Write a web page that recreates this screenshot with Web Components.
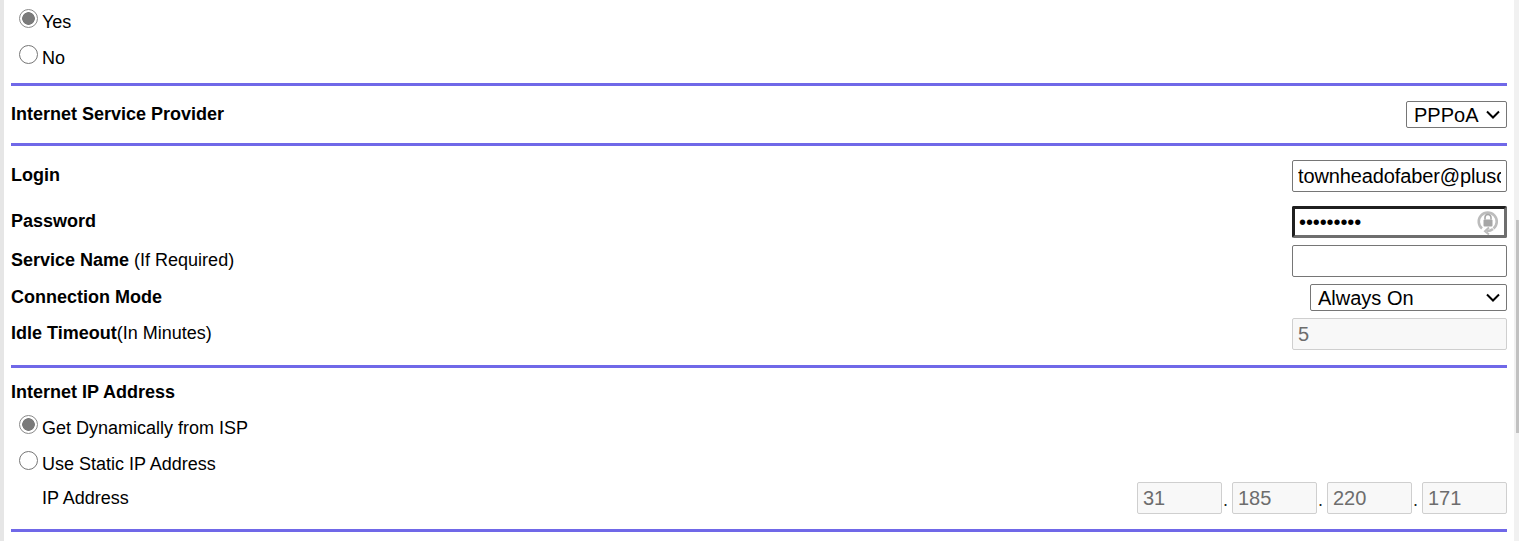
<!DOCTYPE html>
<html lang="en">
<head>
<meta charset="utf-8">
<title>Internet Setup</title>
<style>
	html, body { margin: 0; height: 100%; overflow: hidden; background: #fff; }
</style>
</head>
<body>
<setup-page>
	<form-section pad-top="3" pad-bottom="8">
		<radio-option checked>Yes</radio-option>
		<radio-option>No</radio-option>
	</form-section>
	<form-section pad-top="15" pad-bottom="15">
		<form-row>
			<b slot="label">Internet Service Provider</b>
			<select-field width="101" height="27" options="PPPoA"></select-field>
		</form-row>
	</form-section>
	<form-section pad-top="14" pad-bottom="15">
		<form-row gap="14"><b slot="label">Login</b><text-field value="townheadofaber@pluscom.net"></text-field></form-row>
		<form-row gap="7"><b slot="label">Password</b><text-field type="password" value="townhead1" focused></text-field></form-row>
		<form-row gap="7"><span slot="label"><b>Service Name</b> (If Required)</span><text-field></text-field></form-row>
		<form-row gap="7"><b slot="label">Connection Mode</b><select-field width="197" height="27" options="Always On"></select-field></form-row>
		<form-row><span slot="label"><b>Idle Timeout</b>(In Minutes)</span><text-field value="5" disabled></text-field></form-row>
	</form-section>
	<form-section pad-top="8" pad-bottom="15">
		<form-row height="33"><b slot="label">Internet IP Address</b></form-row>
		<radio-option checked>Get Dynamically from ISP</radio-option>
		<radio-option>Use Static IP Address</radio-option>
		<form-row class="ip" indent="31" height="32" top="1"><span slot="label">IP Address</span><ip-field value="31.185.220.171"></ip-field></form-row>
	</form-section>
	<page-scrollbar></page-scrollbar>
</setup-page>

<script>
const pageTemplate = document.createElement('template')
pageTemplate.innerHTML = `
	<style>
		:host {
			display: block;
			position: relative;
			height: 541px;
			box-sizing: border-box;
			overflow: hidden;
			border-left: 4px solid #e6e6e6;
			padding: 0 12px 0 7px;
			background: #fff;
			color: #000;
			font: 18px "Liberation Sans", Arial, sans-serif;
		}
	</style>
	<slot></slot>
`

class SetupPage extends HTMLElement {
	constructor () {
		super()
		this.attachShadow({ mode: 'open' })
		this.shadowRoot.appendChild(pageTemplate.content.cloneNode(true))
	}
}

const sectionTemplate = document.createElement('template')
sectionTemplate.innerHTML = `
	<style>
		:host {
			display: block;
			border-bottom: 3px solid #7068e8;
		}
		div { display: flex; flex-direction: column; }
	</style>
	<div><slot></slot></div>
`

class FormSection extends HTMLElement {
	constructor () {
		super()
		this.attachShadow({ mode: 'open' })
		this.shadowRoot.appendChild(sectionTemplate.content.cloneNode(true))
	}

	connectedCallback () {
		const box = this.shadowRoot.querySelector('div')
		box.style.paddingTop = (this.getAttribute('pad-top') || 0) + 'px'
		box.style.paddingBottom = (this.getAttribute('pad-bottom') || 0) + 'px'
	}
}

const rowTemplate = document.createElement('template')
rowTemplate.innerHTML = `
	<style>
		:host {
			display: flex;
			align-items: center;
			justify-content: space-between;
		}
		.label { margin-top: -1px; }
		:host(.ip) .label { margin-top: 0; }
	</style>
	<span class="label"><slot name="label"></slot></span>
	<slot></slot>
`

class FormRow extends HTMLElement {
	constructor () {
		super()
		this.attachShadow({ mode: 'open' })
		this.shadowRoot.appendChild(rowTemplate.content.cloneNode(true))
	}

	connectedCallback () {
		if (this.hasAttribute('gap')) this.style.marginBottom = this.getAttribute('gap') + 'px'
		if (this.hasAttribute('top')) this.style.marginTop = this.getAttribute('top') + 'px'
		if (this.hasAttribute('height')) this.style.height = this.getAttribute('height') + 'px'
		if (this.hasAttribute('indent')) this.style.paddingLeft = this.getAttribute('indent') + 'px'
	}
}

const radioTemplate = document.createElement('template')
radioTemplate.innerHTML = `
	<style>
		:host {
			display: flex;
			align-items: center;
			height: 36px;
			padding-left: 8px;
			gap: 4px;
		}
		input {
			appearance: none;
			box-sizing: border-box;
			width: 19px;
			height: 19px;
			margin: -5px 0 0 0;
			border: 1px solid #767676;
			border-radius: 50%;
			background: #fff;
			flex: none;
		}
		input:checked {
			border-color: #8a8a8a;
			background: radial-gradient(circle, #7a7a7a 0 6px, #fff 6.6px);
		}
		label { margin-top: 2px; }
	</style>
	<input type="radio" disabled>
	<label><slot></slot></label>
`

class RadioOption extends HTMLElement {
	constructor () {
		super()
		this.attachShadow({ mode: 'open' })
		this.shadowRoot.appendChild(radioTemplate.content.cloneNode(true))
	}

	connectedCallback () {
		this.shadowRoot.querySelector('input').checked = this.hasAttribute('checked')
	}
}

const textFieldTemplate = document.createElement('template')
textFieldTemplate.innerHTML = `
	<style>
		:host {
			display: block;
			position: relative;
			width: 215px;
			height: 32px;
		}
		input {
			display: block;
			box-sizing: border-box;
			width: 100%;
			height: 100%;
			margin: 0;
			padding: 1px 5px;
			border: 1px solid #767676;
			border-radius: 2px;
			background: #fff;
			color: #000;
			font: 20px "Liberation Sans", Arial, sans-serif;
			letter-spacing: -.12px;
			outline: none;
		}
		input:disabled {
			background: #f8f8f8;
			border-color: #cfcfcf;
			color: #6d6d6d;
			letter-spacing: 0;
		}
		:host([focused]) input {
			padding: 0 30px 0 4px;
			border-width: 3px;
			border-color: #1f1f1f #6e6e6e #6e6e6e #1f1f1f;
			letter-spacing: -.1px;
		}
		svg { position: absolute; right: 8px; top: 3px; }
	</style>
	<input>
`

const revealIcon = `
	<svg width="22" height="26" viewBox="0 0 22 26" fill="none" stroke="#bcbcbc">
		<path d="M5 19.5A9 9 0 1 1 16.5 19.5" stroke-width="2.6"/>
		<path d="M16 20A9 9 0 0 1 10 22" stroke-width="2.6"/>
		<path d="M12 18.5L8 22.2L12 25.5" stroke-width="2"/>
		<path d="M8 10.5V8.5a3 3 0 0 1 6 0v2" stroke="#a6a6a6" stroke-width="1.6"/>
		<rect x="6.5" y="10.5" width="9" height="7" rx="1" fill="#a6a6a6" stroke="none"/>
	</svg>`

class TextField extends HTMLElement {
	constructor () {
		super()
		this.attachShadow({ mode: 'open' })
		this.shadowRoot.appendChild(textFieldTemplate.content.cloneNode(true))
	}

	connectedCallback () {
		const input = this.shadowRoot.querySelector('input')
		input.type = this.getAttribute('type') || 'text'
		input.value = this.getAttribute('value') || ''
		input.disabled = this.hasAttribute('disabled')
		if (this.hasAttribute('width')) this.style.width = this.getAttribute('width') + 'px'
		if (input.type === 'password') this.shadowRoot.appendChild(document.createRange().createContextualFragment(revealIcon))
	}
}

const selectTemplate = document.createElement('template')
selectTemplate.innerHTML = `
	<style>
		:host { display: block; position: relative; }
		select {
			appearance: none;
			display: block;
			box-sizing: border-box;
			width: 100%;
			height: 100%;
			margin: 0;
			padding: 0 24px 0 7px;
			border: 1px solid #767676;
			border-radius: 2px;
			background-color: #fff;
			color: #000;
			font: 20px "Liberation Sans", Arial, sans-serif;
		}
		svg { position: absolute; right: 7px; top: 9px; pointer-events: none; }
	</style>
	<select></select>
	<svg width="14" height="9" viewBox="0 0 14 9" fill="none" stroke="#000" stroke-width="2">
		<path d="M1 1.5L7 7.5L13 1.5"/>
	</svg>
`

class SelectField extends HTMLElement {
	constructor () {
		super()
		this.attachShadow({ mode: 'open' })
		this.shadowRoot.appendChild(selectTemplate.content.cloneNode(true))
	}

	connectedCallback () {
		const select = this.shadowRoot.querySelector('select')
		this.style.width = this.getAttribute('width') + 'px'
		this.style.height = this.getAttribute('height') + 'px'
		for (const text of this.getAttribute('options').split(',')) select.add(new Option(text))
	}
}

const ipTemplate = document.createElement('template')
ipTemplate.innerHTML = `
	<style>
		:host {
			display: flex;
			align-items: flex-end;
			line-height: 16px;
		}
		span {
			width: 10px;
			margin-bottom: 6px;
			padding-left: 1px;
			box-sizing: border-box;
			color: #222;
		}
	</style>
`

class IpField extends HTMLElement {
	constructor () {
		super()
		this.attachShadow({ mode: 'open' })
		this.shadowRoot.appendChild(ipTemplate.content.cloneNode(true))
	}

	connectedCallback () {
		this.getAttribute('value').split('.').forEach((part, i) => {
			if (i) {
				const dot = document.createElement('span')
				dot.textContent = '.'
				this.shadowRoot.appendChild(dot)
			}
			const field = document.createElement('text-field')
			field.setAttribute('value', part)
			field.setAttribute('width', '85')
			field.setAttribute('disabled', '')
			this.shadowRoot.appendChild(field)
		})
	}
}

const scrollbarTemplate = document.createElement('template')
scrollbarTemplate.innerHTML = `
	<style>
		:host {
			position: absolute;
			top: 0;
			right: 0;
			bottom: 0;
			width: 5px;
			background: #f1f1f1;
		}
		div {
			position: absolute;
			top: 220px;
			right: 0;
			width: 3px;
			height: 213px;
			background: #c1c1c1;
		}
	</style>
	<div></div>
`

class PageScrollbar extends HTMLElement {
	constructor () {
		super()
		this.attachShadow({ mode: 'open' })
		this.shadowRoot.appendChild(scrollbarTemplate.content.cloneNode(true))
	}
}

customElements.define('setup-page', SetupPage)
customElements.define('form-section', FormSection)
customElements.define('form-row', FormRow)
customElements.define('radio-option', RadioOption)
customElements.define('text-field', TextField)
customElements.define('select-field', SelectField)
customElements.define('ip-field', IpField)
customElements.define('page-scrollbar', PageScrollbar)
</script>
</body>
</html>
